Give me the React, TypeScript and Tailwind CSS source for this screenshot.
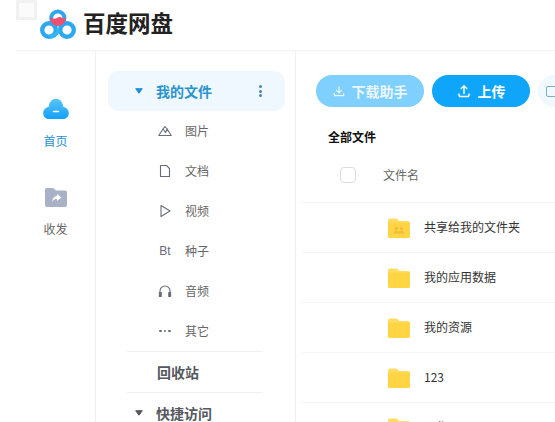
const FONT = '"Microsoft YaHei","Noto Sans CJK SC","Liberation Sans",sans-serif';

function Logo() {
  return (
    <svg width="36" height="30" viewBox="0 0 36 30" fill="none">
      <circle cx="9" cy="21" r="6.8" stroke="#2ba8f0" strokeWidth="4.4" />
      <circle cx="27" cy="21" r="6.8" stroke="#2ba8f0" strokeWidth="4.4" />
      <path d="M9 27.8 C 14 28 17 25 18.5 21" stroke="#35b6f6" strokeWidth="3.6" />
      <circle cx="17.8" cy="9" r="6.6" stroke="#2fa6ee" strokeWidth="4" />
      <path d="M11 10 A7 7 0 0 0 24.8 10 C 23 12 21 7.5 18 9.5 C 15 11.5 13 11 11 10 Z" fill="#f0506e" stroke="#f0506e" strokeWidth="2" strokeLinejoin="round" />
    </svg>
  );
}

function Caret({ color }: { color: string }) {
  return (
    <svg width="8" height="6" viewBox="0 0 8 6">
      <path d="M0.7 0.7 H7.3 L4 5.2 Z" fill={color} stroke={color} strokeLinejoin="round" />
    </svg>
  );
}

function Stroke({ children }: { children: React.ReactNode }) {
  return (
    <svg width="14" height="14" viewBox="0 0 14 14" fill="none" stroke="#666c78" strokeWidth="1.1" strokeLinejoin="round">
      {children}
    </svg>
  );
}

function Folder({ shared }: { shared?: boolean }) {
  return (
    <svg width="22" height="20" viewBox="0 0 22 20">
      <path d="M0 2.5 a2 2 0 0 1 2-2 h6 a3 3 0 0 1 2.4 1.5 L11 3 h9 a2 2 0 0 1 2 2 v13 a2 2 0 0 1-2 2 H2 a2 2 0 0 1-2-2 Z" fill="#ffdc62" />
      <path d="M0 4.5 h22 v13.5 a2 2 0 0 1-2 2 H2 a2 2 0 0 1-2-2 Z" fill="#ffd543" />
      {shared && (
        <g fill="#f3bd3a">
          <circle cx="8.5" cy="10.5" r="1.7" />
          <circle cx="13.5" cy="10.5" r="1.7" />
          <path d="M5.5 15.5 c0-2 1.5-3 3-3 s3 1 3 3 Z M10.5 15.5 c0-2 1.5-3 3-3 s3 1 3 3 Z" />
        </g>
      )}
    </svg>
  );
}

const subItems: { label: string; icon: React.ReactNode }[] = [
  { label: "图片", icon: <Stroke><path d="M0.8 11.5 L5 5 L7.6 8.5 L9.2 5 L13.2 11.5 Z" /><path d="M5 5 L7 2.6 L9.2 5" /></Stroke> },
  { label: "文档", icon: <Stroke><path d="M2.5 1.5 H8.5 L11.5 4.5 V12.5 H2.5 Z" /></Stroke> },
  { label: "视频", icon: <Stroke><path d="M3 1.5 L12 7 L3 12.5 Z" /></Stroke> },
  { label: "种子", icon: <span className="text-[12px] leading-none text-[#666c78]" style={{ fontFamily: '"Liberation Sans",sans-serif' }}>Bt</span> },
  { label: "音频", icon: <Stroke><path d="M2 10 V7 a5 5 0 0 1 10 0 V10" /><rect x="1.4" y="8.5" width="1.8" height="4" fill="#666c78" /><rect x="10.8" y="8.5" width="1.8" height="4" fill="#666c78" /></Stroke> },
  { label: "其它", icon: <span className="flex gap-[2px]"><i className="size-[2.5px] rounded-full bg-[#666c78]" /><i className="size-[2.5px] rounded-full bg-[#666c78]" /><i className="size-[2.5px] rounded-full bg-[#666c78]" /></span> },
];

const rows = [
  { name: "共享给我的文件夹", shared: true },
  { name: "我的应用数据" },
  { name: "我的资源" },
  { name: "123" },
  { name: "工作" },
];

export default function App() {
  return (
    <div className="h-[422px] w-[555px] overflow-hidden bg-white pl-4" style={{ fontFamily: FONT }}>
      <div className="relative flex h-[51px] items-center border-b border-[#f5f5f6] shadow-[0_1px_3px_rgba(0,0,0,0.02)]">
        <div className="absolute left-0 top-0 h-5 w-[21px] bg-[#f1f1f2] p-[3px]"><div className="size-full bg-white/70" /></div>
        <div className="ml-[24px] mt-[-3px]"><Logo /></div>
        <span className="ml-[7px] mb-[6px] text-[22.5px] font-bold leading-none text-[#222]">百度网盘</span>
      </div>
      <div className="flex h-[371px]">
        <div className="flex w-[79px] shrink-0 flex-col items-center pt-[46px]">
          <svg width="26" height="23" viewBox="0 0 28 25">
            <defs>
              <linearGradient id="c" x1="0" y1="0" x2="0" y2="1">
                <stop offset="0" stopColor="#5cc4fd" />
                <stop offset="1" stopColor="#10a0fb" />
              </linearGradient>
            </defs>
            <path d="M7 24 C-2 24 -2 12 6 11 C7 -1 21 -1 22 11 C30 12 30 24 21 24 Z" fill="url(#c)" />
            <rect x="10.5" y="15" width="7" height="1.6" rx="0.8" fill="#fff" />
          </svg>
          <span className="mt-[13px] text-[12px] leading-[16px] text-[#1f8fd8]">首页</span>
          <svg className="mt-[38px]" width="22" height="20" viewBox="0 0 22 20">
            <path d="M0 3 a2 2 0 0 1 2-2 h6 l3 2.5 h9 a2 2 0 0 1 2 2 V18 a2 2 0 0 1-2 2 H2 a2 2 0 0 1-2-2 Z" fill="#a9b1c7" />
            <path d="M12 7 L16.5 10.5 L12 14 V12 C10 12 8.5 12.5 7 14.5 C7.5 11 9.5 9 12 9 Z" fill="#fff" />
          </svg>
          <span className="mt-[14px] text-[12px] leading-[16px] text-[#666]">收发</span>
        </div>
        <div className="flex w-[201px] shrink-0 flex-col border-x border-[#f0f0f2] pt-[20px] pl-[12px] pr-[10px]">
          <div className="flex h-[40px] shrink-0 items-center rounded-[10px] bg-[#eef8fe] pl-[27px]">
            <Caret color="#1f8fd8" />
            <span className="ml-[13px] flex-1 text-[14px] font-bold text-[#2b93cf]">我的文件</span>
            <span className="mr-[23px] flex flex-col gap-[1.5px]">
              <i className="size-[3px] rounded-full bg-[#4a88b0]" />
              <i className="size-[3px] rounded-full bg-[#4a88b0]" />
              <i className="size-[3px] rounded-full bg-[#4a88b0]" />
            </span>
          </div>
          {subItems.map((s) => (
            <div key={s.label} className="flex h-[40px] shrink-0 items-center pl-[50px]">
              <span className="flex w-[14px] items-center justify-center">{s.icon}</span>
              <span className="ml-[13px] text-[12px] text-[#666]">{s.label}</span>
            </div>
          ))}
          <div className="ml-[19px] mr-[22px] flex h-[42px] shrink-0 items-center border-y border-[#f0f0f2] pl-[30px]">
            <span className="text-[14px] font-bold text-[#55595f]">回收站</span>
          </div>
          <div className="flex h-[40px] shrink-0 items-center pl-[27px]">
            <Caret color="#55595f" />
            <span className="ml-[13px] text-[14px] font-bold text-[#55595f]">快捷访问</span>
          </div>
        </div>
        <div className="flex min-w-0 flex-1 flex-col overflow-hidden pl-[5px]">
          <div className="flex shrink-0 gap-2 pl-[15px] pt-[24px]">
            <div className="flex h-[32px] w-[108px] shrink-0 items-center justify-center rounded-full bg-[#7fcfff] text-[14px] font-bold text-[#eaf7ff]">
              <svg className="mr-[7px]" width="12" height="12" viewBox="0 0 13 13" fill="none" stroke="#eaf7ff" strokeWidth="1.3"><path d="M6.5 1.5 V8 M3.5 5.5 L6.5 8.5 L9.5 5.5 M1.5 9 V11.5 H11.5 V9" /></svg>
              下载助手
            </div>
            <div className="flex h-[32px] w-[98px] shrink-0 items-center justify-center rounded-full bg-[#0ea5fb] text-[14px] font-bold text-white">
              <svg className="mr-[7px]" width="14" height="14" viewBox="0 0 14 14" fill="none" stroke="#fff" strokeWidth="1.5"><path d="M7 10 V2 M3.8 5 L7 1.8 L10.2 5 M2 9.5 A5 5 0 0 0 2.5 12.5 H11.5 A5 5 0 0 0 12 9.5" /></svg>
              上传
            </div>
            <div className="flex h-[32px] w-[98px] shrink-0 items-center rounded-full bg-[#f0f9ff] pl-[8px]">
              <span className="h-[11px] w-[12px] rounded-[2px] border border-[#7aaecb]" />
            </div>
          </div>
          <div className="shrink-0 pl-[27px] pt-[20px] text-[12px] font-bold leading-[20px] text-[#111]">全部文件</div>
          <div className="flex h-[55px] shrink-0 items-center pl-[39px]">
            <span className="size-4 rounded-[4px] border border-[#dcdde0]" />
            <span className="ml-[27px] text-[12px] text-[#666]">文件名</span>
          </div>
          {rows.map((r) => (
            <div key={r.name} className="flex h-[50px] shrink-0 items-center border-t border-[#f6f6f7] pl-[87px]">
              <Folder shared={r.shared} />
              <span className="ml-[14px] mb-[2px] text-[12px] text-[#333]">{r.name}</span>
            </div>
          ))}
        </div>
      </div>
    </div>
  );
}
